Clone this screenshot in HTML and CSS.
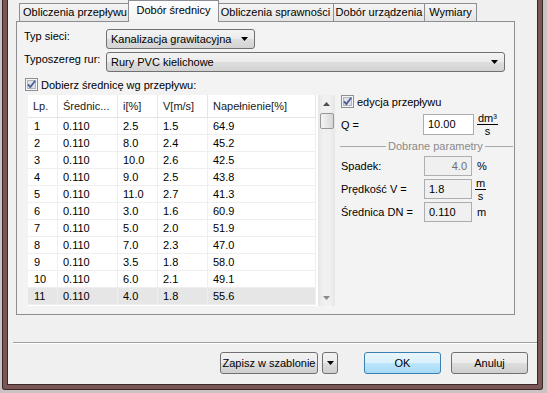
FILE: index.html
```html
<!DOCTYPE html>
<html lang="pl">
  <head>
    <meta charset="utf-8" />
    <title>Dobór średnicy</title>
    <link rel="stylesheet" href="styles.css">
  </head>
  <body>
    <div class="screen">
      <div class="frame">
        <div class="dialog">

          <!-- Tabs -->
          <div class="tabs-wrap">
            <div class="tabstrip">
              <div class="tab tab-flow">Obliczenia przepływu</div>
              <div class="tab tab-dn active">Dobór średnicy</div>
              <div class="tab tab-eff">Obliczenia sprawności</div>
              <div class="tab tab-dev">Dobór urządzenia</div>
              <div class="tab tab-dim">Wymiary</div>
            </div>

            <div class="page">
              <div class="field-row first">
                <span class="field-label">Typ sieci:</span>
                <div class="combo combo-short">
                  <span>Kanalizacja grawitacyjna</span>
                  <svg class="combo-arrow" width="7" height="4" viewBox="0 0 7 4"><path d="M0 0h7L3.5 4z" fill="#000"/></svg>
                </div>
              </div>
              <div class="field-row">
                <span class="field-label">Typoszereg rur:</span>
                <div class="combo combo-long">
                  <span>Rury PVC kielichowe</span>
                  <svg class="combo-arrow" width="7" height="4" viewBox="0 0 7 4"><path d="M0 0h7L3.5 4z" fill="#000"/></svg>
                </div>
              </div>

              <div class="check-row main-check">
                <svg class="checkbox" width="13" height="13" viewBox="0 0 13 13">
                  <rect x="0.5" y="0.5" width="12" height="12" fill="#f6f6f6" stroke="#8e8f8f"/>
                  <rect x="2.5" y="2.5" width="8" height="8" fill="#dfe2e7" stroke="#b2b6bc"/>
                  <path d="M3 6.3 L5.3 9 L10.2 2.8" fill="none" stroke="#4b5f96" stroke-width="1.8"/>
                </svg>
                <span>Dobierz średnicę wg przepływu:</span>
              </div>

              <div class="main">
                <!-- Results list -->
                <div class="list">
                  <table class="grid">
                    <colgroup>
                      <col class="c-lp"><col class="c-dn"><col class="c-i"><col class="c-v"><col class="c-n">
                    </colgroup>
                    <thead>
                      <tr><th>Lp.</th><th>Średnic...</th><th>i[%]</th><th>V[m/s]</th><th>Napełnienie[%]</th></tr>
                    </thead>
                    <tbody>
                      <tr><td>1</td><td>0.110</td><td>2.5</td><td>1.5</td><td>64.9</td></tr>
                      <tr><td>2</td><td>0.110</td><td>8.0</td><td>2.4</td><td>45.2</td></tr>
                      <tr><td>3</td><td>0.110</td><td>10.0</td><td>2.6</td><td>42.5</td></tr>
                      <tr><td>4</td><td>0.110</td><td>9.0</td><td>2.5</td><td>43.8</td></tr>
                      <tr><td>5</td><td>0.110</td><td>11.0</td><td>2.7</td><td>41.3</td></tr>
                      <tr><td>6</td><td>0.110</td><td>3.0</td><td>1.6</td><td>60.9</td></tr>
                      <tr><td>7</td><td>0.110</td><td>5.0</td><td>2.0</td><td>51.9</td></tr>
                      <tr><td>8</td><td>0.110</td><td>7.0</td><td>2.3</td><td>47.0</td></tr>
                      <tr><td>9</td><td>0.110</td><td>3.5</td><td>1.8</td><td>58.0</td></tr>
                      <tr><td>10</td><td>0.110</td><td>6.0</td><td>2.1</td><td>49.1</td></tr>
                      <tr class="selected"><td>11</td><td>0.110</td><td>4.0</td><td>1.8</td><td>55.6</td></tr>
                    </tbody>
                  </table>
                  <div class="scrollbar">
                    <div class="scroll-btn">
                      <svg width="7" height="4" viewBox="0 0 7 4"><path d="M0 4h7L3.5 0z" fill="#4d4d4d"/></svg>
                    </div>
                    <div class="scroll-track">
                      <div class="scroll-thumb"></div>
                    </div>
                    <div class="scroll-btn">
                      <svg width="7" height="4" viewBox="0 0 7 4"><path d="M0 0h7L3.5 4z" fill="#8a8a8a"/></svg>
                    </div>
                  </div>
                </div>

                <!-- Flow / picked parameters -->
                <div class="side">
                  <div class="check-row">
                    <svg class="checkbox" width="13" height="13" viewBox="0 0 13 13">
                      <rect x="0.5" y="0.5" width="12" height="12" fill="#f6f6f6" stroke="#8e8f8f"/>
                      <rect x="2.5" y="2.5" width="8" height="8" fill="#dfe2e7" stroke="#b2b6bc"/>
                      <path d="M3 6.3 L5.3 9 L10.2 2.8" fill="none" stroke="#4b5f96" stroke-width="1.8"/>
                    </svg>
                    <span>edycja przepływu</span>
                  </div>

                  <div class="param q-row">
                    <span class="param-label">Q =</span>
                    <div class="input input-q">10.00</div>
                    <span class="fraction"><span class="num">dm³</span><span class="den">s</span></span>
                  </div>

                  <div class="legend">Dobrane parametry</div>

                  <div class="param">
                    <span class="param-label">Spadek:</span>
                    <div class="input readonly disabled">4.0</div>
                    <span class="unit">%</span>
                  </div>
                  <div class="param">
                    <span class="param-label">Prędkość V =</span>
                    <div class="input readonly">1.8</div>
                    <span class="fraction"><span class="num">m</span><span class="den">s</span></span>
                  </div>
                  <div class="param">
                    <span class="param-label">Średnica DN =</span>
                    <div class="input readonly">0.110</div>
                    <span class="unit">m</span>
                  </div>
                </div>
              </div>
            </div>
          </div>

          <div class="separator"></div>

          <!-- Dialog buttons -->
          <div class="buttons">
            <button class="btn btn-save">Zapisz w szablonie</button>
            <button class="btn btn-drop">
              <svg width="7" height="4" viewBox="0 0 7 4"><path d="M0 0h7L3.5 4z" fill="#000"/></svg>
            </button>
            <button class="btn btn-ok">OK</button>
            <button class="btn btn-cancel">Anuluj</button>
          </div>

        </div>
      </div>
    </div>
  </body>
</html>
```

FILE: styles.css
```css
* {
  margin: 0;
  padding: 0;
  box-sizing: border-box;
}

body {
  font-family: 'Liberation Sans', Tahoma, Arial, sans-serif;
  font-size: 11px;
  color: #000;
  background-color: #cbc3c3;
}

/* Window frame */
.screen {
  width: 547px;
  height: 393px;
  padding: 0 4px 3px 2px;
  background: #cbc3c3;
}

.frame {
  height: 100%;
  border: 1px solid #3a2828;
  border-top: 0;
  border-radius: 0 0 3px 3px;
  background: #7a5656;
  padding: 0 4px 4px 4px;
}

.dialog {
  height: 100%;
  border: 1px solid #3a2828;
  border-top: 0;
  background: #f0f0f0;
  display: flex;
  flex-direction: column;
}

/* Tabs */
.tabs-wrap {
  margin-left: 8px;
  width: 499px;
}

.tabstrip {
  display: flex;
  align-items: flex-end;
  height: 21px;
  padding-left: 3px;
}

.tab {
  height: 18px;
  line-height: 16px;
  text-align: center;
  border: 1px solid #8c8e94;
  border-bottom: 0;
  margin-right: -1px;
  background: linear-gradient(#f5f5f5, #e4e4e4);
  white-space: nowrap;
}

.tab-flow { width: 112px; }
.tab-dn { width: 91px; }
.tab-eff { width: 117px; }
.tab-dev { width: 92px; }
.tab-dim { width: 53px; }

.tab.active {
  position: relative;
  z-index: 1;
  height: 22px;
  line-height: 18px;
  margin: 0 -2px -1px -2px;
  background: linear-gradient(#fdfdfd, #f3f3f3);
}

.page {
  height: 294px;
  border: 1px solid #8c8e94;
  background: #f3f3f3;
  padding-left: 7px;
}

.field-row {
  display: flex;
  align-items: center;
  margin-top: 3px;
}

.field-row.first {
  margin-top: 7px;
}

.field-label {
  width: 82px;
  padding-top: 1px;
  align-self: flex-start;
}

.combo {
  height: 20px;
  display: flex;
  align-items: center;
  justify-content: space-between;
  padding: 0 6px 0 4px;
  border: 1px solid #707070;
  border-radius: 3px;
  background: linear-gradient(#f3f3f3, #ebebeb 50%, #dedede 51%, #d3d3d3);
}

.combo-short { width: 149px; }
.combo-long { width: 399px; }

/* Checkboxes */
.check-row {
  display: flex;
  align-items: center;
  gap: 3px;
  height: 13px;
}

.main-check {
  margin: 6px 0 0 1px;
}

.checkbox {
  flex: none;
}

/* Main area */
.main {
  display: flex;
  margin-top: 4px;
  padding-left: 4px;
}

.list {
  display: flex;
  width: 307px;
  height: 211px;
  background: #fff;
}

.grid {
  width: 288px;
  height: max-content;
  border-collapse: separate;
  border-spacing: 0;
  table-layout: fixed;
  margin-right: 2px;
}

.c-lp { width: 30px; }
.c-dn { width: 60px; }
.c-i { width: 40px; }
.c-v { width: 50px; }
.c-n { width: 108px; }

.grid th {
  height: 23px;
  font-weight: normal;
  text-align: left;
  color: #1a1a1a;
  padding: 0 0 1px 5px;
  border-right: 1px solid #e3e6ea;
  border-bottom: 1px solid #e5e5e5;
  white-space: nowrap;
  overflow: hidden;
}

.grid td {
  line-height: 16px;
  padding: 0 0 0 5px;
  border-right: 1px solid #efefef;
  border-bottom: 1px solid #efefef;
  white-space: nowrap;
  overflow: hidden;
}

.grid td:first-child {
  padding-left: 6px;
}

.grid tr.selected td {
  background: #e6e6e6;
}

.scrollbar {
  width: 17px;
  display: flex;
  flex-direction: column;
  background: linear-gradient(90deg, #e6e6e6, #f0f0f0 30%, #f0f0f0 70%, #e6e6e6);
}

.scroll-btn {
  height: 17px;
  display: flex;
  align-items: center;
  justify-content: center;
}

.scroll-track {
  flex: 1;
  padding: 1px 1px 0 2px;
}

.scroll-thumb {
  height: 16px;
  border: 1px solid #979797;
  border-radius: 2px;
  background: linear-gradient(90deg, #f4f4f4, #e6e6e6 50%, #d6d6d6);
}

/* Right side parameters */
.side {
  width: 173px;
  margin-left: 5px;
  padding-left: 1px;
}

.param {
  display: flex;
  align-items: center;
  height: 20px;
  margin-top: 3px;
}

.q-row {
  height: 21px;
  margin-top: 6px;
}

.param-label {
  width: 83px;
  flex: none;
}

.input {
  width: 48px;
  height: 20px;
  line-height: 18px;
  padding: 0 4px;
  border: 1px solid #abadb3;
  background: #f0f0f0;
}

.input-q {
  width: 51px;
  height: 21px;
  line-height: 19px;
  margin-left: -1px;
  background: #fff;
}

.input.disabled {
  text-align: right;
  color: #6d6d6d;
  border-color: #afafaf;
}

.unit {
  margin-left: 5px;
}

.fraction {
  display: inline-flex;
  flex-direction: column;
  align-items: center;
  margin-left: 3px;
  line-height: 10px;
}

.fraction .num {
  padding: 0 1px 1px;
  border-bottom: 1px solid #000;
}

.fraction .den {
  padding-top: 1px;
}

.legend {
  display: flex;
  align-items: center;
  margin: 5px 0 4px -1px;
  height: 12px;
  color: #8a8a8a;
}

.legend::before,
.legend::after {
  content: "";
  border-top: 1px solid #a9a9a9;
}

.legend::before { width: 46px; margin-right: 2px; }
.legend::after { flex: 1; margin-left: 2px; }

/* Bottom buttons */
.separator {
  margin: 27px 0 0 5px;
  border-top: 1px solid #a0a0a0;
  border-bottom: 1px solid #fff;
}

.buttons {
  display: flex;
  justify-content: flex-end;
  margin-top: 8px;
  padding-right: 9px;
}

.btn {
  height: 22px;
  font: inherit;
  color: #000;
  border: 1px solid #707070;
  border-radius: 3px;
  background: linear-gradient(#f2f2f2, #ebebeb 50%, #dddddd 51%, #cfcfcf);
  display: flex;
  align-items: center;
  justify-content: center;
}

.btn-save { width: 98px; }
.btn-drop { width: 16px; margin-left: 4px; }
.btn-ok { width: 77px; margin-left: 26px; border-color: #3c7fb1; background: linear-gradient(#eaf6fd, #d9f0fc 50%, #bee6fd 51%, #a7d9f5); }
.btn-cancel { width: 77px; margin-left: 10px; }
```
